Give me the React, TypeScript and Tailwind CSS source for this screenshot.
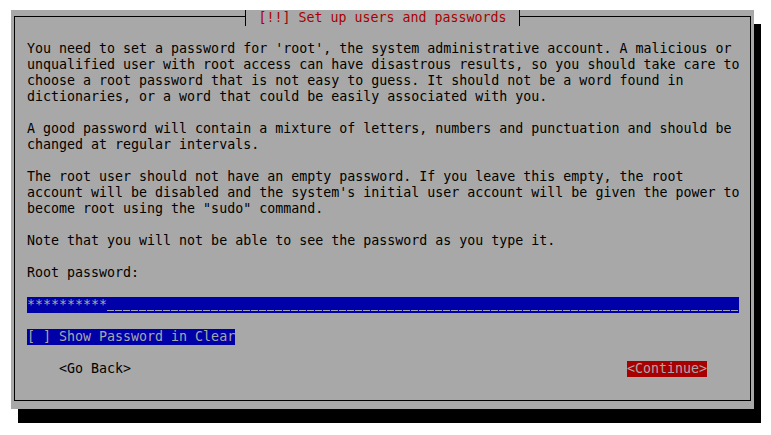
import React from 'react';

const bodyLines = [
  "You need to set a password for 'root', the system administrative account. A malicious or",
  'unqualified user with root access can have disastrous results, so you should take care to',
  'choose a root password that is not easy to guess. It should not be a word found in',
  'dictionaries, or a word that could be easily associated with you.',
  '',
  'A good password will contain a mixture of letters, numbers and punctuation and should be',
  'changed at regular intervals.',
  '',
  'The root user should not have an empty password. If you leave this empty, the root',
  "account will be disabled and the system's initial user account will be given the power to",
  'become root using the "sudo" command.',
  '',
  'Note that you will not be able to see the password as you type it.',
  '',
  'Root password:',
  '',
];

export default function App() {
  return (
    <div
      className="w-[771px] h-[435px] bg-white pt-[10px] pl-[11px] text-[13.3px] leading-[16px]"
      style={{ fontFamily: '"DejaVu Sans Mono", "Liberation Mono", monospace' }}
    >
      {/* Dialog */}
      <div className="w-[743px] h-[399px] bg-[#a8a8a8] shadow-[7px_14px_0_0_#000] px-[3px] pb-[8px] flex flex-col">
        {/* Title bar */}
        <div className="flex h-[16px] shrink-0">
          <div className="flex-1 mt-[6px] border-t border-l border-black" />
          <div className="w-px bg-black" />
          <div className="px-[12px] text-[#a80000] whitespace-pre">[!!] Set up users and passwords</div>
          <div className="w-px bg-black" />
          <div className="flex-1 mt-[6px] border-t border-r border-black" />
        </div>

        {/* Body */}
        <div className="flex-1 border-l border-r border-b border-black pl-[12px] pt-[15px] text-black">
          {bodyLines.map((line, i) => (
            <div key={i} className="h-[16px] whitespace-pre">
              {line}
            </div>
          ))}

          {/* Password entry */}
          <div className="w-[712px] h-[16px] bg-[#0000a8] text-[#a8a8a8] flex">
            <span className="whitespace-pre">**********</span>
            <div className="flex-1 flex flex-col justify-end pb-[2px]">
              <div className="h-px bg-[repeating-linear-gradient(90deg,#a8a8a8_0_7px,transparent_7px_8px)]" />
            </div>
          </div>
          <div className="h-[16px]" />

          {/* Checkbox */}
          <div className="h-[16px]">
            <span className="inline-block bg-[#0000a8] text-[#a8a8a8] whitespace-pre">[ ] Show Password in Clear</span>
          </div>
          <div className="h-[16px]" />

          {/* Buttons */}
          <div className="w-[712px] h-[16px] flex justify-between pl-[32px] pr-[32px]">
            <span className="whitespace-pre">&lt;Go Back&gt;</span>
            <span className="whitespace-pre bg-[#a80000] text-[#a8a8a8]">&lt;Continue&gt;</span>
          </div>
        </div>
      </div>
    </div>
  );
}
